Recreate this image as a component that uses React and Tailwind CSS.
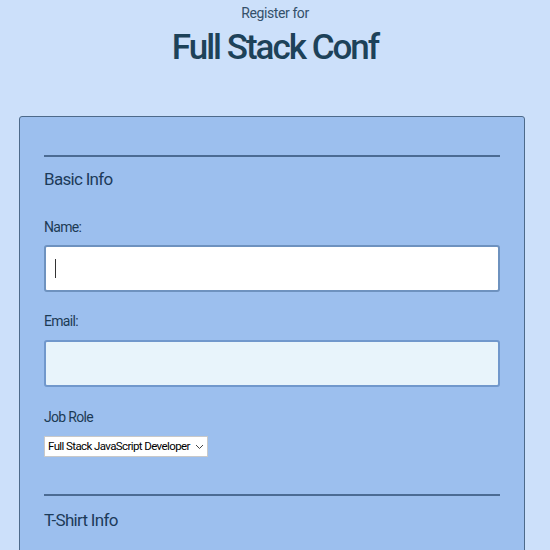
const App = () => {
  return (
    <div className="min-h-screen bg-[#cce0fa] text-[#1c3b55]" style={{ fontFamily: 'Roboto, sans-serif' }}>
      <header className="text-center pt-[3px]">
        <p className="text-[14px] leading-[20px] tracking-[-0.4px] text-[#34506a]">Register for</p>
        <h1 className="text-[35px] leading-[50px] font-medium tracking-[-2px] text-[#1d4259]">Full Stack Conf</h1>
      </header>

      <form className="ml-[19px] mr-[25px] mt-[43px] bg-[#9cbfee] border border-[#4d6a8a] rounded-[3px] px-[24px] pt-[38px] pb-10">
        <fieldset>
          <hr className="border-0 h-[2px] bg-[#4b6b93]" />
          <h2 className="text-[17px] leading-[24px] mt-[10px] tracking-[-0.7px] text-[#1c3b5a]">Basic Info</h2>

          <label className="block text-[14px] leading-[20px] mt-[26px] tracking-[-0.7px]">Name:</label>
          <div className="mt-[8px] h-[47px] bg-white border-2 border-[#6e92bf] rounded-[3px] flex items-center pl-[9px]">
            <span className="w-px h-[19px] bg-[#333]" />
          </div>

          <label className="block text-[14px] leading-[20px] mt-[19px] tracking-[-0.7px]">Email:</label>
          <div className="mt-[9px] h-[47px] bg-[#e8f4fb] border-2 border-[#7198cc] rounded-[3px]" />

          <label className="block text-[14px] leading-[20px] mt-[20px] tracking-[-0.7px]">Job Role</label>
          <div className="mt-[9px] inline-flex items-center h-[21px] bg-white border border-[#c9c9c9] px-[3px] text-[11.5px] tracking-[-0.6px] text-black">
            <span>Full Stack JavaScript Developer</span>
            <svg width="9" height="6" viewBox="0 0 9 6" className="ml-[5px]" fill="none" stroke="#444" strokeWidth="1">
              <path d="M1 1l3.5 3.5L8 1" />
            </svg>
          </div>
        </fieldset>

        <fieldset className="mt-[37px]">
          <hr className="border-0 h-[2px] bg-[#4b6b93]" />
          <h2 className="text-[17px] leading-[24px] mt-[12px] tracking-[-0.7px] text-[#1c3b5a]">T-Shirt Info</h2>
        </fieldset>
      </form>
    </div>
  );
};

export default App;
